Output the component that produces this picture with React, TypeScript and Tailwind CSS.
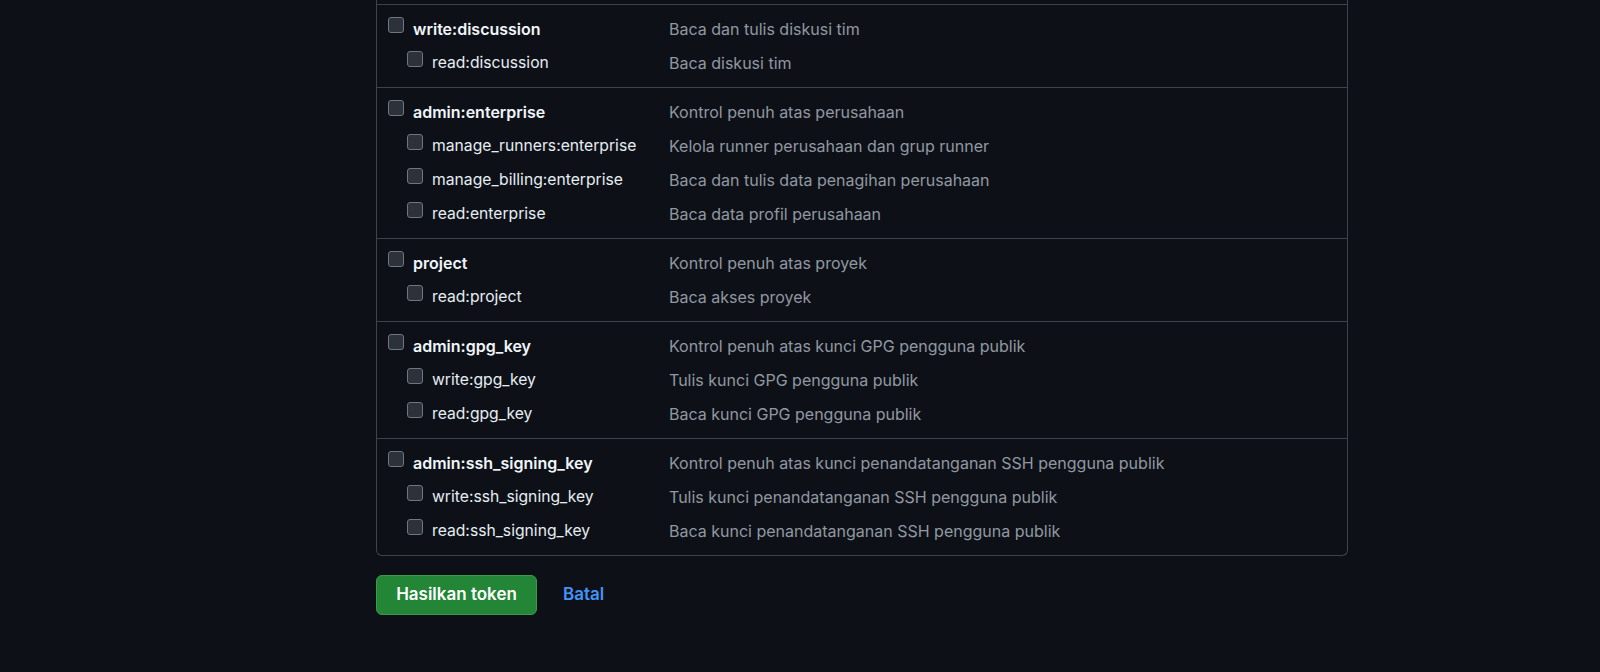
const sections: { name: string; desc: string; subs: [string, string][] }[] = [
  {
    name: "write:discussion",
    desc: "Baca dan tulis diskusi tim",
    subs: [["read:discussion", "Baca diskusi tim"]],
  },
  {
    name: "admin:enterprise",
    desc: "Kontrol penuh atas perusahaan",
    subs: [
      ["manage_runners:enterprise", "Kelola runner perusahaan dan grup runner"],
      ["manage_billing:enterprise", "Baca dan tulis data penagihan perusahaan"],
      ["read:enterprise", "Baca data profil perusahaan"],
    ],
  },
  {
    name: "project",
    desc: "Kontrol penuh atas proyek",
    subs: [["read:project", "Baca akses proyek"]],
  },
  {
    name: "admin:gpg_key",
    desc: "Kontrol penuh atas kunci GPG pengguna publik",
    subs: [
      ["write:gpg_key", "Tulis kunci GPG pengguna publik"],
      ["read:gpg_key", "Baca kunci GPG pengguna publik"],
    ],
  },
  {
    name: "admin:ssh_signing_key",
    desc: "Kontrol penuh atas kunci penandatanganan SSH pengguna publik",
    subs: [
      ["write:ssh_signing_key", "Tulis kunci penandatanganan SSH pengguna publik"],
      ["read:ssh_signing_key", "Baca kunci penandatanganan SSH pengguna publik"],
    ],
  },
];

const Box = () => (
  <span className="mt-[5px] block h-4 w-4 shrink-0 rounded-[3px] border border-[#6e7681] bg-[#2d3139]" />
);

const Row = ({ label, desc, sub }: { label: string; desc: string; sub?: boolean }) => (
  <div className="flex h-[34px] items-start">
    <div className={`flex w-[281px] shrink-0 items-start ${sub ? "pl-[19px]" : ""}`}>
      <Box />
      <span
        className={`ml-[9px] leading-[34px] ${
          sub ? "text-[15.7px] text-[#e6edf3]" : "font-semibold text-[#f0f6fc]"
        }`}
      >
        {label}
      </span>
    </div>
    <span className="leading-[34px] text-[#9198a1]">{desc}</span>
  </div>
);

export default function App() {
  return (
    <div
      className="min-h-[672px] w-full bg-[#0d1117] pl-[376px] text-[16px]"
      style={{ fontFamily: "Inter, 'Noto Sans', sans-serif" }}
    >
      <div className="w-[972px] rounded-b-md border-x border-b border-[#3d444d] pt-[4px]">
        {sections.map((s) => (
          <div key={s.name} className="border-t border-[#3d444d] px-[11px] py-[7px]">
            <Row label={s.name} desc={s.desc} />
            {s.subs.map(([l, d]) => (
              <Row key={l} label={l} desc={d} sub />
            ))}
          </div>
        ))}
      </div>
      <div className="mt-[19px] flex items-center">
        <button className="h-10 w-[161px] rounded-md border border-[#3d9a4c] bg-[#238636] text-[17px] font-semibold text-white">
          Hasilkan token
        </button>
        <a className="ml-[26px] text-[17px] font-semibold text-[#4493f8]">Batal</a>
      </div>
    </div>
  );
}
